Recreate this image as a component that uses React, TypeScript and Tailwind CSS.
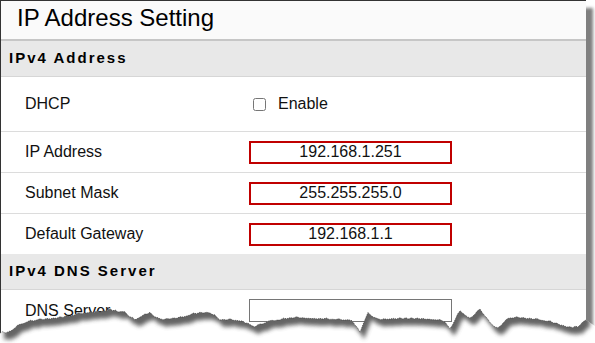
// Recreation of the "IP Address Setting" panel with a torn-paper bottom edge

const EDGE: [number, number][] = [
  [0, 333], [8, 333], [15, 328], [20, 325], [27, 322], [40, 320], [50, 319], [60, 318],
  [75, 315], [85, 313], [100, 312], [110, 310], [118, 312], [125, 313], [130, 317], [135, 320],
  [142, 316], [150, 313], [155, 317], [160, 320], [170, 319], [180, 318], [190, 315], [200, 313],
  [210, 313], [215, 316], [220, 320], [230, 320], [240, 321], [248, 324], [255, 327], [260, 325],
  [265, 323], [272, 321], [280, 320], [290, 318], [300, 318], [320, 319], [345, 320], [352, 322],
  [355, 325], [360, 333], [364, 322], [368, 313], [373, 317], [378, 320], [390, 319], [400, 319],
  [420, 319], [440, 320], [445, 322], [450, 330], [455, 320], [460, 311], [465, 315], [470, 319],
  [475, 314], [480, 310], [485, 316], [490, 323], [495, 327], [498, 329], [504, 322], [510, 318],
  [520, 318], [530, 319], [540, 320], [550, 322], [560, 325], [570, 328], [578, 327], [583, 323],
  [586, 320],
]

// densify the edge a little so it looks ragged
function edgePoints() {
  const pts: [number, number][] = []
  for (let i = 0; i < EDGE.length - 1; i++) {
    const [x1, y1] = EDGE[i]
    const [x2, y2] = EDGE[i + 1]
    const steps = Math.max(1, Math.round((x2 - x1) / 3))
    for (let s = 0; s < steps; s++) {
      const t = s / steps
      const x = x1 + (x2 - x1) * t
      const j = (i + s) % 2 === 0 ? 0 : -1.3 * Math.abs(Math.sin(x * 1.7))
      pts.push([x, y1 + (y2 - y1) * t + j])
    }
  }
  pts.push(EDGE[EDGE.length - 1])
  return pts
}

function TornEdge() {
  const pts = edgePoints()
  const line = pts.map(([x, y]) => `${x.toFixed(1)},${y.toFixed(1)}`).join(" ")
  const below = `M0,343 L${pts.map(([x, y]) => `${x.toFixed(1)},${y.toFixed(1)}`).join(" L")} L595,326 L595,343 Z`
  const paper = `M0,0 L586,0 L${[...pts].reverse().map(([x, y]) => `${x.toFixed(1)},${y.toFixed(1)}`).join(" L")} Z`

  return (
    <svg className="pointer-events-none absolute left-0 top-0" width="595" height="343" viewBox="0 0 595 343">
      <defs>
        <filter id="edgeBlur" x="-5%" y="-5%" width="110%" height="120%">
          <feGaussianBlur stdDeviation="2.2" />
        </filter>
        <clipPath id="belowEdge">
          <path d={below} />
        </clipPath>
      </defs>
      <path d={below} fill="#ffffff" />
      <g clipPath="url(#belowEdge)">
        <path d={paper} fill="#4a4a4a" opacity="0.85" filter="url(#edgeBlur)" transform="translate(4 7)" />
      </g>
      <polyline points={line} fill="none" stroke="#333" strokeWidth="0.7" strokeDasharray="1 1" />
    </svg>
  )
}

function Section({ title }: { title: string }) {
  return (
    <div className="flex h-[36px] items-center border-b border-[#d6d6d6] bg-[#e8e8e8] pl-2 text-[15px] font-bold tracking-[2px] text-black">
      {title}
    </div>
  )
}

function Row({ label, children, className }: { label: string; children: React.ReactNode; className: string }) {
  return (
    <div className={`flex items-center ${className}`}>
      <div className="w-[248px] pl-6">{label}</div>
      <div className="flex items-center">{children}</div>
    </div>
  )
}

function RedInput({ value }: { value: string }) {
  return (
    <input
      readOnly
      value={value}
      className="h-[23px] w-[203px] border-2 border-[#c00000] bg-white text-center text-[16px] text-[#111] outline-none"
    />
  )
}

export default function App() {
  return (
    <div className="relative h-[343px] w-[595px] overflow-hidden bg-white font-['Liberation_Sans',Arial,sans-serif] text-[16px] text-[#111]">
      <div className="h-[343px] w-[586px] border-l border-t border-[#333] bg-white shadow-[7px_8px_3px_rgba(0,0,0,0.5)]">
        {/* Title */}
        <div className="h-[40px] border-b-2 border-[#c6c6c6] bg-[#fafafa] pl-4 text-[24px] leading-[33px] text-black">
          IP Address Setting
        </div>

        <Section title="IPv4 Address" />

        <Row label="DHCP" className="h-[55px] border-b border-[#dcdcdc]">
          <input type="checkbox" className="ml-1 h-[13px] w-[13px]" />
          <span className="ml-3">Enable</span>
        </Row>
        <Row label="IP Address" className="h-[41px] border-b border-[#dcdcdc]">
          <RedInput value="192.168.1.251" />
        </Row>
        <Row label="Subnet Mask" className="h-[41px] border-b border-[#dcdcdc]">
          <RedInput value="255.255.255.0" />
        </Row>
        <Row label="Default Gateway" className="h-[40px]">
          <RedInput value="192.168.1.1" />
        </Row>

        <Section title="IPv4 DNS Server" />

        <Row label="DNS Server" className="h-[41px]">
          <input
            readOnly
            value=""
            className="h-[23px] w-[203px] border border-[#767676] bg-white text-[16px] outline-none"
          />
        </Row>
      </div>

      <TornEdge />
    </div>
  )
}
